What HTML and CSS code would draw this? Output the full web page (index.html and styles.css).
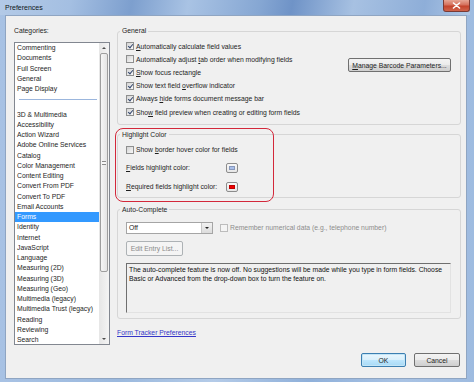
FILE: index.html
```html
<!DOCTYPE html>
<html lang="en">
<head>
    <meta charset="UTF-8">
    <title>Preferences</title>
    <link rel="stylesheet" href="styles.css">
</head>
<body>
<div class="window">
    <div class="titlebar">
        <span class="title">Preferences</span>
        <span class="close">
            <svg width="9" height="7" viewBox="0 0 9 7"><path d="M1.5 1 L7.5 6 M7.5 1 L1.5 6" stroke="#fff" stroke-width="1.6" stroke-linecap="round"/></svg>
        </span>
    </div>

    <div class="client">
        <div class="main">
            <!-- Categories -->
            <div class="categories">
                <div class="cat-label">Categories:</div>
                <div class="listbox">
                    <ul class="items">
                        <li>Commenting</li>
                        <li>Documents</li>
                        <li>Full Screen</li>
                        <li>General</li>
                        <li>Page Display</li>
                        <li class="sep"></li>
                        <li>3D &amp; Multimedia</li>
                        <li>Accessibility</li>
                        <li>Action Wizard</li>
                        <li>Adobe Online Services</li>
                        <li>Catalog</li>
                        <li>Color Management</li>
                        <li>Content Editing</li>
                        <li>Convert From PDF</li>
                        <li>Convert To PDF</li>
                        <li>Email Accounts</li>
                        <li class="selected">Forms</li>
                        <li>Identity</li>
                        <li>Internet</li>
                        <li>JavaScript</li>
                        <li>Language</li>
                        <li>Measuring (2D)</li>
                        <li>Measuring (3D)</li>
                        <li>Measuring (Geo)</li>
                        <li>Multimedia (legacy)</li>
                        <li>Multimedia Trust (legacy)</li>
                        <li>Reading</li>
                        <li>Reviewing</li>
                        <li>Search</li>
                        <li>Security</li>
                    </ul>
                    <div class="scrollbar">
                        <span class="arrow up"></span>
                        <span class="thumb"><i></i></span>
                        <span class="track"></span>
                        <span class="arrow down"></span>
                    </div>
                </div>
            </div>

            <!-- Forms panel -->
            <div class="panel">
                <fieldset class="group">
                    <legend>General</legend>
                    <div class="general-body">
                        <div class="checks">
                            <div class="check"><span class="cb on"></span><span><u>A</u>utomatically calculate field values</span></div>
                            <div class="check"><span class="cb"></span><span>Automatically adjust <u>t</u>ab order when modifying fields</span></div>
                            <div class="check"><span class="cb on"></span><span><u>S</u>how focus rectangle</span></div>
                            <div class="check"><span class="cb on"></span><span>Show text field <u>o</u>verflow indicator</span></div>
                            <div class="check"><span class="cb on"></span><span>Always <u>h</u>ide forms document message bar</span></div>
                            <div class="check"><span class="cb on"></span><span>Sho<u>w</u> field preview when creating or editing form fields</span></div>
                        </div>
                        <button class="btn barcode"><u>M</u>anage Barcode Parameters...</button>
                    </div>
                </fieldset>

                <div class="hl-wrap">
                    <fieldset class="group">
                        <legend>Highlight Color</legend>
                        <div class="highlight-body">
                            <div class="check"><span class="cb"></span><span>Show <u>b</u>order hover color for fields</span></div>
                            <div class="color-row">
                                <span><u>F</u>ields highlight color:</span>
                                <span class="swatch"><i class="blue"></i></span>
                            </div>
                            <div class="color-row">
                                <span><u>R</u>equired fields highlight color:</span>
                                <span class="swatch"><i class="red"></i></span>
                            </div>
                        </div>
                    </fieldset>
                    <div class="hl-mark"></div>
                </div>

                <fieldset class="group auto">
                    <legend>Auto-Complete</legend>
                    <div class="auto-body">
                        <div class="auto-row">
                            <div class="select">
                                <span class="select-value">Off</span>
                                <span class="select-arrow"></span>
                            </div>
                            <div class="remember"><span class="cb disabled"></span><span>Remember numerical data (e.g., telephone number)</span></div>
                        </div>
                        <button class="btn edit" disabled>Edit Entry List...</button>
                        <div class="note">The auto-complete feature is now off. No suggestions will be made while you type in form fields. Choose Basic or Advanced from the drop-down box to turn the feature on.</div>
                    </div>
                </fieldset>

                <a class="tracker" href="#">Form Tracker Preferences</a>
            </div>
        </div>

        <div class="footer">
            <button class="btn ok">OK</button>
            <button class="btn cancel">Cancel</button>
        </div>
    </div>
</div>
</body>
</html>
```

FILE: styles.css
```css
* {
    margin: 0;
    padding: 0;
    box-sizing: border-box;
}

body {
    width: 474px;
    height: 382px;
    overflow: hidden;
    font-family: "Liberation Sans", Arial, sans-serif;
    font-size: 6.8px;
    color: #1e1e1e;
    background: #8eaed8;
}

/* Window frame */
.window {
    width: 474px;
    height: 382px;
    display: flex;
    flex-direction: column;
    padding: 0 7px 3px 5px;
    background: linear-gradient(90deg, #a8c2e4 0%, #9bb9de 25%, #b4cbe8 45%, #8fb0da 65%, #a9c3e4 85%, #9ebbe0 100%);
}

.titlebar {
    height: 15px;
    flex: none;
    display: flex;
    justify-content: space-between;
    align-items: flex-start;
    margin-right: -3px;
    background: linear-gradient(100deg, #b3cae7 0%, #a4bfe2 15%, #7d9fce 28%, #a9c3e4 40%, #86a7d3 55%, #6f93c7 62%, #a7c1e2 75%, #8eaed8 90%, #b0c8e6 100%);
    margin-left: -5px;
    padding-left: 5px;
}

.title {
    font-size: 7px;
    line-height: 10px;
    padding-top: 3px;
    color: #101820;
}

.close {
    width: 27px;
    height: 12px;
    display: flex;
    align-items: center;
    justify-content: center;
    border: 1px solid #7b3a34;
    border-top: none;
    border-radius: 0 0 3px 3px;
    background: linear-gradient(#e6a594 0%, #d5705c 45%, #c4432c 55%, #d0644c 100%);
}

/* Client area */
.client {
    flex: 1;
    display: flex;
    flex-direction: column;
    background: #f0f0f0;
    border: 1px solid #8fa5c2;
    padding: 10px 5px 11px 8px;
}

.main {
    display: flex;
    gap: 7px;
}

/* Categories list */
.categories {
    width: 96px;
    flex: none;
}

.cat-label {
    line-height: 10px;
    height: 10px;
    margin-bottom: 6px;
}

.listbox {
    height: 303px;
    border: 1px solid #828790;
    background: #fff;
    display: flex;
}

.items {
    flex: 1;
    list-style: none;
    overflow: hidden;
}

.items li {
    height: 10.25px;
    line-height: 10.25px;
    padding-left: 2px;
    white-space: nowrap;
}

.items li.sep::before {
    content: "";
    display: block;
    margin: 5px 2px 0;
    border-top: 1px solid #9bb6dd;
}

.items li.selected {
    background: #3399ff;
    color: #fff;
}

.scrollbar {
    width: 10px;
    flex: none;
    display: flex;
    flex-direction: column;
    background: linear-gradient(90deg, #e6e6e6, #f4f4f4);
}

.arrow {
    height: 10px;
    flex: none;
    display: flex;
    align-items: center;
    justify-content: center;
}

.arrow::before {
    content: "";
    border-left: 2px solid transparent;
    border-right: 2px solid transparent;
}

.arrow.up::before { border-bottom: 2px solid #4d4d4d; }
.arrow.down::before { border-top: 2px solid #4d4d4d; }

.thumb {
    height: 219px;
    flex: none;
    margin: 0 1px;
    border: 1px solid #9e9e9e;
    border-radius: 2px;
    background: linear-gradient(90deg, #f6f6f6, #e4e4e4);
    display: flex;
    align-items: center;
    justify-content: center;
}

.thumb i {
    width: 4px;
    height: 4px;
    border-top: 1px solid #8a8a8a;
    border-bottom: 1px solid #8a8a8a;
    background: linear-gradient(#f6f6f6 40%, #8a8a8a 40%, #8a8a8a 60%, #f6f6f6 60%);
}

.track {
    flex: 1;
}

/* Right panel */
.panel {
    width: 344px;
    flex: none;
}

.group {
    border: 1px solid #d6d6d6;
    border-radius: 3px;
    min-width: 0;
}

.group legend {
    margin-left: 2px;
    padding: 0 2px;
    line-height: 10px;
}

.general-body {
    display: flex;
    padding: 3.5px 9px 5px 8px;
}

.checks {
    flex: 1;
}

.check {
    display: flex;
    align-items: center;
    height: 13.2px;
    white-space: nowrap;
}

.cb {
    width: 8px;
    height: 8px;
    flex: none;
    margin-right: 2px;
    border: 1px solid #8e8f8f;
    background: linear-gradient(135deg, #d4d4d4, #f8f8f8);
    position: relative;
}

.cb.on::after {
    content: "";
    position: absolute;
    left: 2px;
    top: 0;
    width: 2px;
    height: 4px;
    border: solid #34476e;
    border-width: 0 1.3px 1.3px 0;
    transform: rotate(40deg);
}

.cb.disabled {
    border-color: #bcbcbc;
    background: #f4f4f4;
}

.btn {
    font: inherit;
    color: inherit;
    height: 14px;
    border: 1px solid #707070;
    border-radius: 2px;
    background: linear-gradient(#f3f3f3 0%, #ebebeb 50%, #dddddd 51%, #cfcfcf 100%);
}

.barcode {
    width: 103px;
    margin-top: 18.5px;
    flex: none;
}

/* Highlight */
.hl-wrap {
    position: relative;
    margin-top: 5px;
}

.highlight-body {
    display: flex;
    flex-direction: column;
    gap: 4.7px;
    padding: 3.4px 8px 3px;
}

.color-row {
    display: grid;
    grid-template-columns: 100px auto;
    align-items: center;
    height: 14px;
}

.swatch {
    width: 12px;
    height: 10px;
    padding: 2px;
    border: 1px solid #8c8c8c;
    border-radius: 2px;
    background: linear-gradient(#f8f8f8, #e6e6e6);
}

.swatch i {
    display: block;
    height: 100%;
    border: 1px solid rgba(0, 0, 0, 0.2);
}

.swatch .blue { background: #a9bfea; }
.swatch .red { background: #ee0000; }

.hl-mark {
    position: absolute;
    left: -2px;
    top: -2px;
    width: 159px;
    height: 74px;
    border: 1.5px solid #d3283a;
    border-radius: 8px;
}

/* Auto-complete */
.auto {
    margin-top: 7px;
}

.auto-body {
    display: flex;
    flex-direction: column;
    align-items: flex-start;
    padding: 7px 9px 5px 8px;
}

.auto-row {
    display: flex;
    align-items: center;
    height: 12px;
}

.select {
    width: 87px;
    height: 12px;
    display: flex;
    border: 1px solid #a5a5a5;
    background: #fff;
}

.select-value {
    flex: 1;
    line-height: 10px;
    padding-left: 2px;
}

.select-arrow {
    width: 11px;
    display: flex;
    align-items: center;
    justify-content: center;
    border-left: 1px solid #c8c8c8;
    background: linear-gradient(#f2f2f2, #dcdcdc);
}

.select-arrow::before {
    content: "";
    border-left: 2px solid transparent;
    border-right: 2px solid transparent;
    border-top: 2px solid #222;
}

.remember {
    display: flex;
    align-items: center;
    margin-left: 7px;
    color: #8d8d8d;
    white-space: nowrap;
}

.btn.edit {
    margin-top: 7px;
    width: 57px;
    height: 15px;
    border-color: #adb2b5;
    background: #f4f4f4;
    color: #8a8a8a;
}

.note {
    margin-top: 7px;
    width: 100%;
    height: 50px;
    padding: 1px 2px;
    line-height: 9px;
    border: 1px solid;
    border-color: #6f6f6f #e2e2e2 #e2e2e2 #6f6f6f;
    color: #111;
}

.tracker {
    display: inline-block;
    margin-top: 9px;
    line-height: 10px;
    color: #3535c8;
}

/* Footer buttons */
.footer {
    display: flex;
    justify-content: flex-end;
    gap: 8px;
    padding-top: 8px;
    padding-right: 1px;
}

.btn.ok {
    width: 45px;
    border-color: #3c7fb1;
    background: linear-gradient(#eaf6fd 0%, #d9f0fc 50%, #bee6fd 51%, #a7d9f5 100%);
    box-shadow: inset 0 0 0 1px #c4e5f6;
}

.btn.cancel {
    width: 46px;
}
```
